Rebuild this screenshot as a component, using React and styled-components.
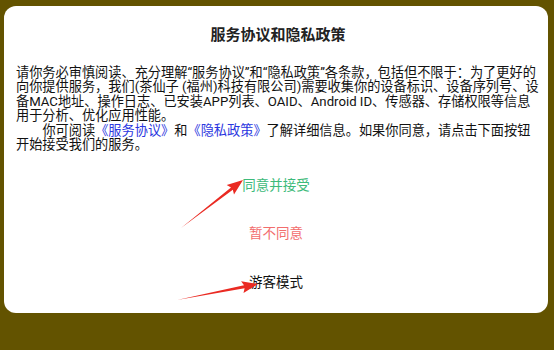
import React from 'react';
import styled, { createGlobalStyle } from 'styled-components';

const GlobalStyle = createGlobalStyle`
  html, body {
    margin: 0;
    padding: 0;
    background: #635300;
    font-family: Roboto, "Noto Sans CJK SC", sans-serif;
  }
`;

const Screen = styled.div`
  position: relative;
  width: 554px;
  height: 350px;
  box-sizing: border-box;
  padding: 6px 6px 0 4px;
  background: #635300;
  overflow: hidden;
`;

const Dialog = styled.div`
  display: flex;
  flex-direction: column;
  height: 307px;
  box-sizing: border-box;
  padding: 19px 8px 5px 12px;
  background: #fff;
  border-radius: 12px;
`;

const Title = styled.h1`
  margin: 0;
  font-size: 15px;
  line-height: 20px;
  font-weight: bold;
  text-align: center;
  color: #222;
`;

const Body = styled.div`
  margin-top: 21px;
  margin-right: 4px;
  font-size: 13.2px;
  line-height: 14.4px;
  color: #111;
`;

const Para = styled.p`
  margin: 0;
  margin-right: -4px;
  text-indent: ${(p) => (p.$indent ? '2em' : '0')};
`;

const Link = styled.a`
  color: #2a36e0;
  text-decoration: none;
`;

const Actions = styled.div`
  display: flex;
  flex-direction: column;
  margin-top: 7px;
  margin-right: 4px;
`;

const Action = styled.button`
  display: flex;
  align-items: center;
  justify-content: center;
  height: 48.5px;
  padding: 0;
  border: 0;
  background: none;
  font-family: inherit;
  font-size: 13.5px;
  color: ${(p) => p.$color};
`;

const Overlay = styled.svg`
  position: absolute;
  left: 0;
  top: 0;
  pointer-events: none;
`;

function arrowPoints(x1, y1, x2, y2, head = 14, headW = 6, shaftW = 3) {
  const dx = x2 - x1;
  const dy = y2 - y1;
  const len = Math.hypot(dx, dy);
  const ux = dx / len;
  const uy = dy / len;
  const nx = -uy;
  const ny = ux;
  const bx = x2 - ux * head;
  const by = y2 - uy * head;
  const pts = [
    [x1, y1],
    [bx + nx * shaftW / 2, by + ny * shaftW / 2],
    [bx - ux * 2 + nx * headW, by - uy * 2 + ny * headW],
    [x2, y2],
    [bx - ux * 2 - nx * headW, by - uy * 2 - ny * headW],
    [bx - nx * shaftW / 2, by - ny * shaftW / 2],
  ];
  return pts.map((p) => p.map((v) => v.toFixed(1)).join(',')).join(' ');
}

export default function App() {
  return (
    <Screen>
      <GlobalStyle />
      <Dialog>
        <Title>服务协议和隐私政策</Title>
        <Body>
          <Para>
            请你务必审慎阅读、充分理解“服务协议”和“隐私政策”各条款，包括但不限于：为了更好的向你提供服务，我们(茶仙子 (福州)科技有限公司)需要收集你的设备标识、设备序列号、设备MAC地址、操作日志、已安装APP列表、OAID、Android ID、传感器、存储权限等信息用于分析、优化应用性能。
          </Para>
          <Para $indent>
            你可阅读<Link>《服务协议》</Link>和<Link>《隐私政策》</Link>了解详细信息。如果你同意，请点击下面按钮开始接受我们的服务。
          </Para>
        </Body>
        <Actions>
          <Action $color="#3dba7a">同意并接受</Action>
          <Action $color="#f26d6d">暂不同意</Action>
          <Action $color="#111">游客模式</Action>
        </Actions>
      </Dialog>
      <Overlay width="554" height="350" viewBox="0 0 554 350">
        <polygon points={arrowPoints(181, 228, 243, 180)} fill="#ea2a22" />
        <polygon points={arrowPoints(177, 300, 258, 284)} fill="#ea2a22" />
      </Overlay>
    </Screen>
  );
}
